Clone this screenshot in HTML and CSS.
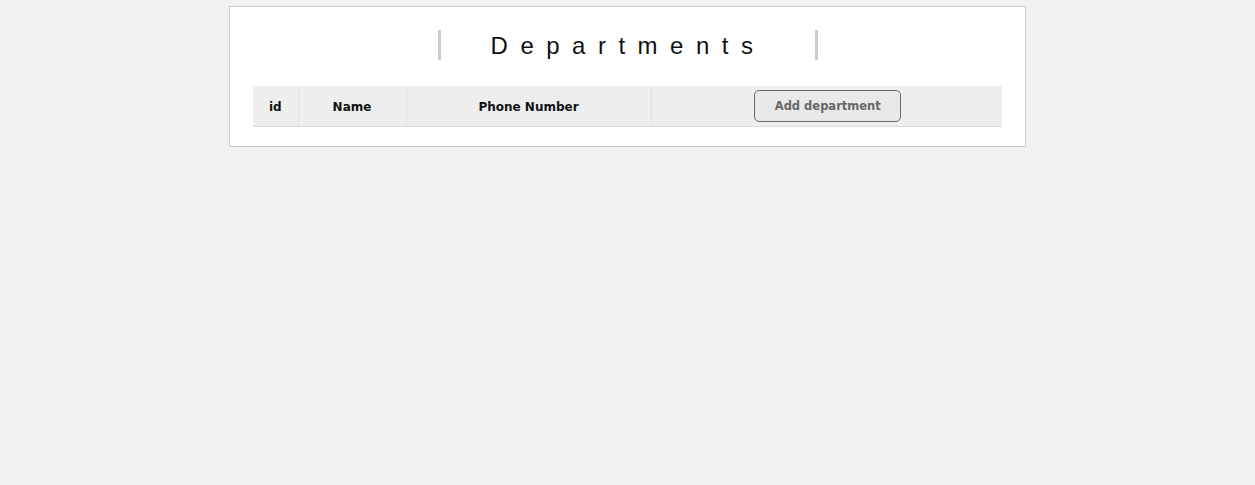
FILE: index.html
```html
<!DOCTYPE html>
<html>
<head>
<meta charset="utf-8">
<title>Departments</title>
<link rel="stylesheet" href="styles.css">
</head>
<body>
<main class="card">
  <div class="title-wrap">
    <h1 class="title">Departments</h1>
  </div>
  <table class="dept-table">
    <thead>
      <tr>
        <th class="col-id">id</th>
        <th class="col-name">Name</th>
        <th class="col-phone">Phone Number</th>
        <th class="col-action"><button class="add-btn" type="button">Add department</button></th>
      </tr>
    </thead>
    <tbody></tbody>
  </table>
</main>
</body>
</html>
```
FILE: styles.css
```css
html, body {
  margin: 0;
  padding: 0;
  background: #f2f2f2;
}
body {
  padding-top: 6px;
  font-family: "DejaVu Sans", Verdana, sans-serif;
}
.card {
  width: 797px;
  margin: 0 auto;
  background: #ffffff;
  border: 1px solid #cccccc;
  padding: 23px 23px 19px 23px;
  box-sizing: border-box;
}
.title-wrap {
  display: flex;
  justify-content: center;
}
.title {
  margin: 0;
  box-sizing: border-box;
  width: 380px;
  height: 30px;
  padding-left: 1px;
  border-left: 3px solid #cccccc;
  border-right: 3px solid #cccccc;
  font-family: "Liberation Sans", Arial, sans-serif;
  font-weight: normal;
  font-size: 24px;
  line-height: 31px;
  letter-spacing: 12.5px;
  color: #111111;
  text-align: center;
}
.dept-table {
  margin-top: 26px;
  width: 749px;
  border-collapse: collapse;
  background: #eeeeee;
}
.dept-table th {
  height: 40px;
  padding: 2px 0 0 0;
  font-size: 12px;
  font-weight: bold;
  color: #111111;
  text-align: center;
  border-left: 1px solid #e0e0e0;
  border-bottom: 1px solid #dcdcdc;
  box-sizing: border-box;
}
.dept-table th:first-child {
  border-left: none;
}
.col-id { width: 45px; }
.col-name { width: 108px; }
.col-phone { width: 245px; }
.add-btn {
  font-family: "DejaVu Sans", Verdana, sans-serif;
  font-size: 11.5px;
  font-weight: bold;
  color: #666666;
  background: #e9e9e9;
  border: 1px solid #6a6a6a;
  border-radius: 5px;
  width: 147px;
  height: 32px;
  padding: 0;
  margin-left: 2px;
  margin-top: -2px;
  cursor: pointer;
}
```
